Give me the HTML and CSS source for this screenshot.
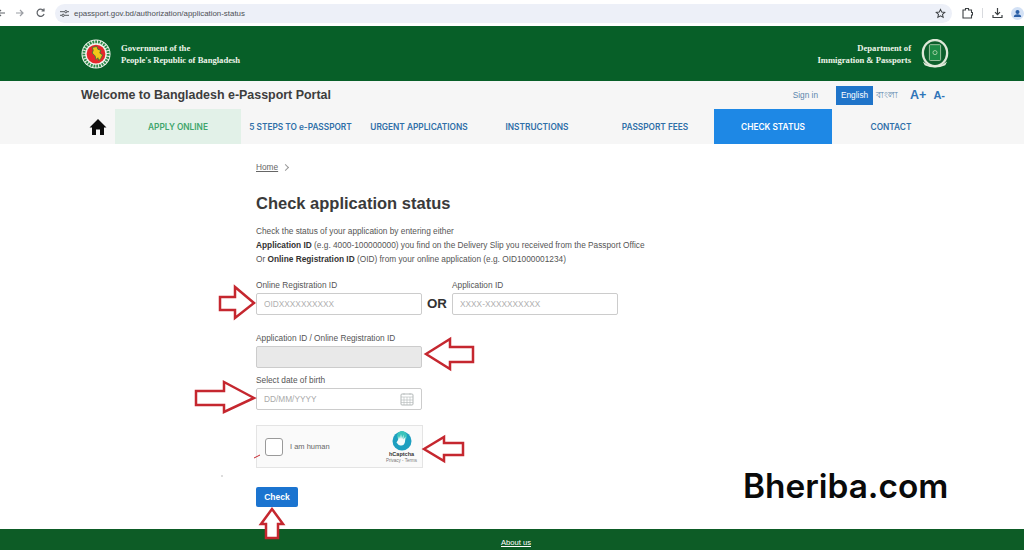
FILE: index.html
```html
<!DOCTYPE html>
<html lang="en">
<head>
    <meta charset="UTF-8">
    <meta name="viewport" content="width=device-width, initial-scale=1.0">
    <title>Check application status</title>
    <link rel="stylesheet" href="styles.css">
</head>
<body>
    <!-- Browser toolbar -->
    <div class="toolbar">
        <svg class="tool-nav" width="52" height="26" viewBox="0 0 52 26" fill="none" stroke="#5f6368" stroke-width="1.2">
            <path d="M-3 13H4M1 10l3 3-3 3" transform="rotate(180 1 13)"/>
            <path d="M16 13h7M20 10l3 3-3 3" stroke="#9a9da3"/>
            <path d="M43.5 10.5a3.6 3.6 0 1 0 .6 3.5M44 8.500v2.500h-2.500"/>
        </svg>
        <div class="url-pill">
            <svg width="9" height="9" viewBox="0 0 10 10" fill="none" stroke="#44474c" stroke-width="1">
                <path d="M0 3h5M8 3h2M0 7h2M5 7h5"/>
                <circle cx="6.500" cy="3" r="1.300"/>
                <circle cx="3.500" cy="7" r="1.300"/>
            </svg>
            <span class="url-text">epassport.gov.bd/authorization/application-status</span>
            <svg class="star" width="11" height="11" viewBox="0 0 24 24" fill="none" stroke="#3c4043" stroke-width="2.200">
                <path d="M12 3l2.800 6 6.400.7-4.800 4.300 1.400 6.400L12 17.100l-5.800 3.300 1.400-6.400L2.800 9.700 9.200 9z"/>
            </svg>
        </div>
        <div class="tool-right">
            <svg width="11" height="12" viewBox="0 0 11 12" fill="none" stroke="#3c4043" stroke-width="1.100">
                <path d="M1 3h2.500V1.500h3V3H9.500v2.500H10.500v2.500H9.500v3H1z"/>
            </svg>
            <span class="tool-sep"></span>
            <svg width="11" height="12" viewBox="0 0 11 12" fill="none" stroke="#3c4043" stroke-width="1.200">
                <path d="M5.500 1v6.500M3 5.200l2.500 2.500L8 5.200M1 8v2.500h9V8"/>
            </svg>
            <svg class="avatar" width="13" height="13" viewBox="0 0 13 13">
                <circle cx="6.500" cy="6.500" r="6.500" fill="#d3e1f5"/>
                <circle cx="6.500" cy="5" r="2" fill="#2b5fa6"/>
                <path d="M2.800 10q0-2.800 3.700-2.800t3.700 2.800z" fill="#2b5fa6"/>
            </svg>
        </div>
    </div>

    <!-- Green banner -->
    <header class="banner">
        <div class="banner-side">
            <svg class="seal" width="30" height="30" viewBox="0 0 32 32">
                <circle cx="16" cy="16" r="15.500" fill="#f2f5ee"/>
                <circle cx="16" cy="16" r="13" fill="none" stroke="#2c8a4a" stroke-width="3" stroke-dasharray="2 1"/>
                <circle cx="16" cy="16" r="10" fill="#e5262c"/>
                <path d="M12 9l5-1 1 3 3 1-1 3 3 2-2 4-2 2-1-3-2 2-1-4-3-3 1-3z" fill="#f4c518" stroke="#1d7a3c" stroke-width="0.800"/>
            </svg>
            <div class="banner-text">Government of the<br>People's Republic of Bangladesh</div>
        </div>
        <div class="banner-side">
            <div class="banner-text banner-text-right">Department of<br>Immigration &amp; Passports</div>
            <svg class="seal" width="28" height="30" viewBox="0 0 30 32">
                <ellipse cx="15" cy="15" rx="13" ry="14" fill="#0d5f2c" stroke="#dfe8d8" stroke-width="2.500"/>
                <path d="M2 24q13 10 26 0l-2 4q-11 5-22 0z" fill="#e4eadc"/>
                <rect x="9" y="6" width="12" height="17" rx="1" fill="#1d8a45" stroke="#c8dcc0" stroke-width="0.800"/>
                <circle cx="15" cy="14.500" r="2.200" fill="none" stroke="#d8e8c8" stroke-width="0.700"/>
            </svg>
        </div>
    </header>

    <!-- Welcome row -->
    <div class="welcome">
        <div class="welcome-title">Welcome to Bangladesh e-Passport Portal</div>
        <div class="welcome-tools">
            <a class="sign-in">Sign in</a>
            <span class="lang-on">English</span>
            <span class="lang-off">বাংলা</span>
            <span class="font-size">A+</span>
            <span class="font-size font-small">A-</span>
        </div>
    </div>

    <!-- Main menu -->
    <nav class="menu">
        <a class="menu-home">
            <svg width="18" height="18" viewBox="0 0 18 18" fill="#0c0c0c">
                <path d="M9 1L0.500 9.500H3V17H7V11.500H11V17H15V9.500H17.500z"/>
            </svg>
        </a>
        <a class="menu-item menu-apply">APPLY ONLINE</a>
        <a class="menu-item menu-steps">5 STEPS TO e-PASSPORT</a>
        <a class="menu-item">URGENT APPLICATIONS</a>
        <a class="menu-item">INSTRUCTIONS</a>
        <a class="menu-item">PASSPORT FEES</a>
        <a class="menu-item menu-active">CHECK STATUS</a>
        <a class="menu-item">CONTACT</a>
    </nav>

    <main class="content">
        <div class="crumbs"><a>Home</a><span class="crumb-sep"></span></div>
        <h1>Check application status</h1>
        <p class="intro">
            Check the status of your application by entering either<br>
            <b>Application ID</b> (e.g. 4000-100000000) you find on the Delivery Slip you received from the Passport Office<br>
            Or <b>Online Registration ID</b> (OID) from your online application (e.g. OID1000001234)
        </p>

        <div class="id-row">
            <div class="field">
                <label>Online Registration ID</label>
                <input type="text" placeholder="OIDXXXXXXXXXX">
            </div>
            <span class="or">OR</span>
            <div class="field">
                <label>Application ID</label>
                <input type="text" placeholder="XXXX-XXXXXXXXXX">
            </div>
        </div>

        <div class="field field-merged">
            <label>Application ID / Online Registration ID</label>
            <input type="text" disabled>
        </div>

        <div class="field field-date">
            <label>Select date of birth</label>
            <div class="date-box">
                <span>DD/MM/YYYY</span>
                <svg width="14" height="14" viewBox="0 0 14 14" fill="none" stroke="#b4b9b9" stroke-width="1">
                    <rect x="1" y="2" width="12" height="11" rx="1"/>
                    <path d="M1 5h12M4 1v2M10 1v2M1 8h12M1 10.500h12M4 5v8M7 5v8M10 5v8" stroke-width="0.600"/>
                </svg>
            </div>
        </div>

        <div class="captcha">
            <span class="captcha-check"></span>
            <span class="captcha-label">I am human</span>
            <div class="captcha-brand">
                <svg width="20" height="20" viewBox="0 0 20 20">
                    <circle cx="10" cy="10" r="9.500" fill="#1d9fc0"/>
                    <circle cx="10" cy="5" r="5" fill="#3bc4bb"/>
                    <path d="M6 9l1-4 1 3 1-5 1 5 1.500-4.500 0 5 2-3-.5 5.500q-1 4-4.500 3.500-2.500-.5-4-3z" fill="#f4fbfb"/>
                </svg>
                <div class="captcha-name">hCaptcha</div>
                <div class="captcha-links">Privacy - Terms</div>
            </div>
        </div>

        <button class="check-btn">Check</button>
    </main>

    <footer class="footer"><a>About us</a></footer>

    <!-- Red arrows and watermark drawn on top of the screenshot -->
    <svg class="marks" width="1024" height="550" viewBox="0 0 1024 550" fill="#fff" stroke="#c5272f" stroke-width="2.500">
        <polygon points="254,303 235,287 235,297 220,297 220,310 235,310 235,318"/>
        <polygon points="426,354 450,339 450,347 473,347 473,362 450,362 450,369"/>
        <polygon points="254,398 224,382 224,391 196,391 196,405 224,405 224,412"/>
        <polygon points="424,449 444,437 444,443 463,443 463,455 444,455 444,461"/>
        <polygon points="272,509 261,524 266,524 266,538 278,538 278,524 283,524"/>
        <path d="M254 458l6-3" fill="none" stroke-width="1"/>
        <path d="M222 475.500v1" fill="none" stroke="#777" stroke-width="1"/>
    </svg>
    <div class="watermark">Bheriba.com</div>
</body>
</html>
```

FILE: styles.css
```css
html, body {
    margin: 0;
    padding: 0;
}

body {
    position: relative;
    display: flex;
    flex-direction: column;
    width: 1024px;
    height: 550px;
    overflow: hidden;
    background-color: #fff;
    font-family: "Liberation Sans", Arial, sans-serif;
    color: #444;
}

/* Browser toolbar */
.toolbar {
    display: flex;
    align-items: center;
    height: 26px;
    background-color: #fff;
}

.tool-nav {
    flex: none;
    margin-right: 3px;
}

.url-pill {
    display: flex;
    align-items: center;
    gap: 5px;
    width: 897px;
    height: 19px;
    padding: 0 6px 0 5px;
    box-sizing: border-box;
    border-radius: 10px;
    background-color: #edf0f8;
}

.url-text {
    font-family: "Liberation Sans", sans-serif;
    font-size: 7.9px;
    color: #4c4f55;
}

.star {
    margin-left: auto;
}

.tool-right {
    display: flex;
    align-items: center;
    margin-left: 10px;
}

.tool-sep {
    width: 1px;
    height: 10px;
    margin: 0 9px;
    background-color: #d8dade;
}

.avatar {
    margin-left: 8px;
}

/* Green banner */
.banner {
    display: flex;
    justify-content: space-between;
    align-items: center;
    height: 55px;
    padding: 0 75px 0 81px;
    background-color: #075f28;
}

.banner-side {
    display: flex;
    align-items: center;
    gap: 10px;
}

.banner-text {
    font-family: "Liberation Serif", serif;
    font-size: 8.6px;
    font-weight: bold;
    line-height: 12px;
    color: #eef5ea;
}

.banner-text-right {
    text-align: right;
}

/* Welcome row */
.welcome {
    display: flex;
    justify-content: space-between;
    align-items: center;
    height: 28px;
    padding: 0 79px 0 81px;
    background-color: #f6f6f6;
}

.welcome-title {
    font-size: 12.45px;
    font-weight: bold;
    color: #3d3d3d;
}

.welcome-tools {
    display: flex;
    align-items: center;
}

.sign-in {
    margin-right: 18px;
    font-size: 8.3px;
    color: #5b86ad;
}

.lang-on {
    width: 37px;
    height: 19px;
    font-size: 8.3px;
    line-height: 19px;
    text-align: center;
    color: #fff;
    background-color: #1f74c9;
}

.lang-off {
    width: 37px;
    padding-left: 3px;
    box-sizing: border-box;
    font-family: "Noto Sans", sans-serif;
    font-size: 9px;
    color: #5b86ad;
}

.font-size {
    font-size: 12.5px;
    font-weight: bold;
    color: #2f74b8;
}

.font-small {
    margin-left: 7px;
    font-size: 11px;
}

/* Main menu */
.menu {
    display: flex;
    height: 35px;
    padding-left: 81px;
    background-color: #f6f6f6;
}

.menu-home {
    display: flex;
    justify-content: center;
    align-items: center;
    width: 34px;
}

.menu-item {
    display: flex;
    justify-content: center;
    align-items: center;
    width: 118px;
    font-family: Inter, "Liberation Sans", sans-serif;
    font-size: 8.3px;
    font-weight: 600;
    white-space: nowrap;
    color: #2f6fa8;
}

.menu-apply {
    width: 126px;
    color: #3fa56b;
    background-color: #e2f1e8;
}

.menu-steps {
    width: 119px;
}

.menu-active {
    color: #fff;
    background-color: #1e88e5;
}

/* Form */
.content {
    flex: 1;
    padding: 18px 0 0 256px;
}

.crumbs {
    display: flex;
    align-items: center;
    height: 10px;
    font-size: 8.3px;
    color: #666;
}

.crumbs a {
    text-decoration: underline;
}

.crumb-sep {
    width: 4px;
    height: 4px;
    margin-left: 5px;
    border-top: 1px solid #999;
    border-right: 1px solid #999;
    transform: rotate(45deg);
}

h1 {
    margin: 21px 0 0;
    font-size: 16.5px;
    line-height: 20px;
    color: #3a3a3a;
}

.intro {
    margin: 11px 0 0;
    font-size: 8.3px;
    line-height: 14px;
    color: #555;
}

.intro b {
    color: #333;
}

.id-row {
    display: flex;
    align-items: flex-end;
    margin-top: 14px;
}

.or {
    width: 30px;
    height: 22px;
    font-size: 13.3px;
    font-weight: bold;
    line-height: 21px;
    text-align: center;
    color: #333;
}

.field {
    display: flex;
    flex-direction: column;
    width: 166px;
}

.field label {
    height: 13px;
    font-size: 8.3px;
    line-height: 10px;
    color: #555;
}

.field input, .date-box {
    width: 166px;
    height: 22px;
    padding: 0 7px;
    box-sizing: border-box;
    border: 1px solid #ccc;
    border-radius: 2px;
    background-color: #fff;
    font-family: "Liberation Sans", sans-serif;
    font-size: 8.3px;
    color: #aaa;
}

.field input::placeholder {
    color: #b0b0b0;
}

.field input:disabled {
    background-color: #e9e9e9;
}

.field-merged {
    margin-top: 18px;
}

.field-date {
    margin-top: 7px;
}

.date-box {
    display: flex;
    justify-content: space-between;
    align-items: center;
}

.captcha {
    display: flex;
    align-items: center;
    width: 167px;
    height: 43px;
    margin-top: 15px;
    padding: 0 5px 0 8px;
    box-sizing: border-box;
    border: 1px solid #e4e4e4;
    background-color: #fafafa;
}

.captcha-check {
    width: 16px;
    height: 16px;
    border: 1px solid #9a9a9a;
    border-radius: 3px;
    background-color: #fff;
}

.captcha-label {
    margin-left: 7px;
    font-size: 7.5px;
    color: #666;
}

.captcha-brand {
    display: flex;
    flex-direction: column;
    align-items: center;
    margin-left: auto;
}

.captcha-name {
    font-size: 5.5px;
    font-weight: bold;
    color: #333;
}

.captcha-links {
    margin-top: 1px;
    font-size: 4.5px;
    color: #777;
}

.check-btn {
    display: block;
    width: 42px;
    height: 20px;
    margin-top: 19px;
    padding: 0;
    border: none;
    border-radius: 2px;
    background-color: #1b74d0;
    font-family: "Liberation Sans", sans-serif;
    font-size: 8.5px;
    font-weight: bold;
    color: #fff;
}

.footer {
    display: flex;
    justify-content: center;
    padding-left: 8px;
    height: 21px;
    background-color: #0d5c26;
    font-size: 7.6px;
    line-height: 27px;
    color: #fff;
}

.footer a {
    text-decoration: underline;
}

/* Overlays on top of the page */
.marks {
    position: absolute;
    left: 0;
    top: 0;
    pointer-events: none;
}

.watermark {
    position: absolute;
    left: 743px;
    top: 467px;
    font-family: Inter, "Liberation Sans", sans-serif;
    font-size: 33.4px;
    font-weight: 600;
    line-height: 38px;
    color: #0a0a0a;
}
```
